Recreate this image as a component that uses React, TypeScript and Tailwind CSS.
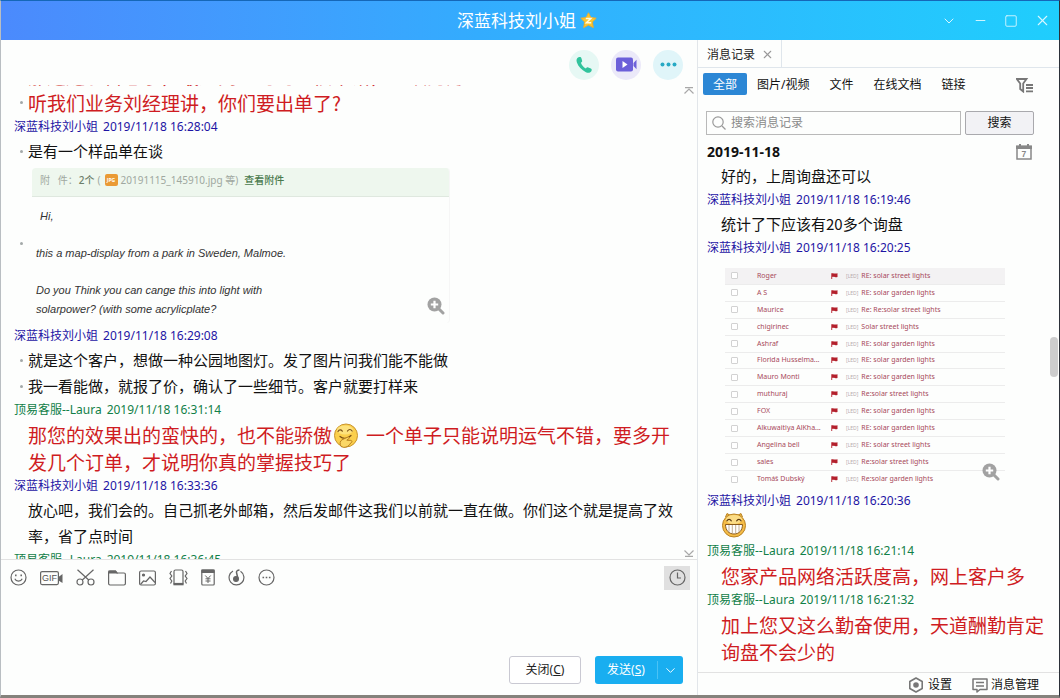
import React, { useState } from 'react';
import { ChevronDown, Minus, Square, X } from 'lucide-react';

const FONT = "font-['Noto_Sans','Noto_Sans_CJK_SC',sans-serif]";
const CJK = "font-['Noto_Sans_CJK_SC',sans-serif]";

const mails = [
  { from: 'Roger', subject: 'RE: solar street lights' },
  { from: 'A S', subject: 'RE: solar garden lights' },
  { from: 'Maurice', subject: 'Re: Re:solar street lights' },
  { from: 'chigirinec', subject: 'Solar street lights' },
  { from: 'Ashraf', subject: 'RE: solar garden lights' },
  { from: 'Florida Husselma...', subject: 'RE: solar garden lights' },
  { from: 'Mauro Monti', subject: 'Re: solar garden lights' },
  { from: 'muthuraj', subject: 'Re:solar street lights' },
  { from: 'FOX', subject: 'Re: solar garden lights' },
  { from: 'Alkuwaitiya AlKha...', subject: 'RE: solar garden lights' },
  { from: 'Angelina bell', subject: 'RE: solar street lights' },
  { from: 'sales', subject: 'Re:solar street lights' },
  { from: 'Tomáš Dubský', subject: 'Re:solar garden lights' },
];

const tabs = ['全部', '图片/视频', '文件', '在线文档', '链接'];

function Meta({ name, time, self }: { name: string; time: string; self?: boolean }) {
  return (
    <p className={`flex h-[22px] shrink-0 gap-[5px] pl-2 text-xs leading-[22px] whitespace-nowrap ${self ? 'text-[#118048]' : 'text-[#1e14a4]'}`}>
      <span>{name}</span>
      <span>{time}</span>
    </p>
  );
}

function Line({ children, dot, red }: { children: React.ReactNode; dot?: boolean; red?: boolean }) {
  return (
    <div className="flex shrink-0 pl-[14px]">
      <span className="flex h-[26px] w-2 shrink-0 items-center">
        {dot && <span className="h-[3px] w-[3px] rounded-full bg-[#a3a9a9]" />}
      </span>
      <p
        className={
          red
            ? `min-w-0 flex-1 text-[19px] leading-[27px] text-[#cf1c22] ${CJK}`
            : `min-w-0 flex-1 text-[15px] leading-[26px] text-[#111] ${CJK}`
        }
      >
        {children}
      </p>
    </div>
  );
}

function ZoomIcon() {
  return (
    <svg width="18" height="18" viewBox="0 0 18 18" fill="none">
      <path d="M11.5 11.5 16 16" stroke="#a2a2a2" strokeWidth="3" strokeLinecap="round" />
      <circle cx="7.5" cy="7.5" r="7" fill="#a2a2a2" />
      <path d="M7.5 3.8v7.4M3.8 7.5h7.4" stroke="#fff" strokeWidth="2.2" />
    </svg>
  );
}

function StarIcon() {
  return (
    <svg width="17" height="17" viewBox="0 0 17 17">
      <path
        d="M8.5.8 10.8 5.6 16.2 6.2 12.3 10 13.3 15.6 8.5 13 3.7 15.6 4.7 10 .8 6.2 6.2 5.6Z"
        fill="#fbc62e"
        stroke="#f0ae2a"
        strokeWidth="1"
        strokeLinejoin="round"
      />
      <path d="M5.8 6.6h5L6.4 10.8h4.8" fill="none" stroke="#fffbe0" strokeWidth="1.5" />
    </svg>
  );
}

function GiggleEmoji() {
  return (
    <svg className="mr-[7px] ml-px inline-block align-[-5px]" width="26" height="25" viewBox="0 0 26 25" fill="none">
      <circle cx="13" cy="12.5" r="11.5" fill="#fbcf4c" stroke="#c9952f" />
      <ellipse cx="12" cy="7" rx="8" ry="4.5" fill="#fde27d" />
      <path d="M5 8.5c1.2-2 3-2 4.3-.3M14.5 8c1.4-2 3.3-2 4.6 0" stroke="#7a4f16" strokeWidth="1.2" strokeLinecap="round" />
      <path d="M7 13.5c3 2.6 8 2.4 11-1" stroke="#7a4f16" strokeWidth="1.2" strokeLinecap="round" />
      <path d="M8 23.5c-1.5-3-1-5.5 1-6.7l6-2.8c1.5-.5 2 .9.8 1.7l-2 1.5 4 .2c1.6.3 1.6 2 0 2.4-1.5 3-4 4.6-7 4.6Z" fill="#fbd766" stroke="#b9801f" />
    </svg>
  );
}

function GrinEmoji() {
  return (
    <svg width="26" height="26" viewBox="0 0 26 26" fill="none">
      <path d="M4.5 5 6 1.5 9 3.2M21.5 5 20 1.5 17 3.2" fill="#eeb63f" stroke="#b98326" />
      <circle cx="13" cy="13.5" r="11.5" fill="#f5bc46" stroke="#b98326" />
      <ellipse cx="13" cy="7.5" rx="8" ry="4.5" fill="#fbdc86" />
      <path d="M6 8.8c1-2 3.2-2 4.2 0M15.8 8.8c1-2 3.2-2 4.2 0" stroke="#5d3a10" strokeWidth="1.3" strokeLinecap="round" />
      <path d="M4.5 12.5h17c0 6-3.5 9.5-8.5 9.5s-8.5-3.5-8.5-9.5Z" fill="#fff" stroke="#8a5a1c" />
      <path d="M8 13v6.8M11.3 13v8.5M14.7 13v8.5M18 13v6.8" stroke="#b39b78" strokeWidth=".8" />
    </svg>
  );
}

function ScrollArrow({ down }: { down?: boolean }) {
  return (
    <svg width="10" height="7" viewBox="0 0 10 7" fill="none" stroke="#a8a8a8" strokeWidth="1.2">
      {down ? <path d="M.5.5 5 5 9.5.5M1 6.4h8" /> : <path d="M1 .6h8M.5 6.5 5 2l4.5 4.5" />}
    </svg>
  );
}

const tools = [
  {
    label: '表情',
    icon: (
      <svg width="17" height="17" viewBox="0 0 17 17" fill="none" stroke="#666" strokeWidth="1.2">
        <circle cx="8.5" cy="8.5" r="7.5" />
        <path d="M4.8 9.8c1.3 3 6.1 3 7.4 0" />
        <path d="M5.8 5.5v1.8M11.2 5.5v1.8" strokeWidth="1.5" />
      </svg>
    ),
  },
  {
    label: 'GIF',
    icon: (
      <svg width="23" height="16" viewBox="0 0 23 16" fill="none">
        <rect x=".6" y="1.6" width="17.8" height="13" rx="1.5" stroke="#666" strokeWidth="1.2" />
        <path d="M18.5 7 22.5 4v9l-4-2.5Z" fill="#666" />
        <text x="2" y="11.3" fontSize="9" fontFamily="Liberation Sans" fill="#555">GIF</text>
      </svg>
    ),
  },
  {
    label: '截图',
    icon: (
      <svg width="19" height="17" viewBox="0 0 19 17" fill="none" stroke="#666" strokeWidth="1.2">
        <path d="M1.5.8 13 11.3M17.5.8 6 11.3" />
        <circle cx="4" cy="13" r="3" />
        <circle cx="15" cy="13" r="3" />
      </svg>
    ),
  },
  {
    label: '文件',
    icon: (
      <svg width="18" height="16" viewBox="0 0 18 16" fill="none" stroke="#666" strokeWidth="1.2">
        <path d="M.6 2.5C.6 1.5 1 1 2 1h5.5l1.5 2h7c1 0 1.4.5 1.4 1.4v9.2c0 .9-.4 1.4-1.4 1.4H2c-1 0-1.4-.5-1.4-1.4Z" />
        <path d="M1 1h6.5L9 3H1Z" fill="#666" />
      </svg>
    ),
  },
  {
    label: '图片',
    icon: (
      <svg width="17" height="16" viewBox="0 0 17 16" fill="none" stroke="#666" strokeWidth="1.2">
        <rect x=".6" y="1" width="15.8" height="14" rx="1.5" />
        <path d="m1.5 14.5 3-3.5 2.5.5 4-4.5 5 5.5" />
        <circle cx="4.5" cy="5" r="1" fill="#666" />
      </svg>
    ),
  },
  {
    label: '抖动',
    icon: (
      <svg width="19" height="17" viewBox="0 0 19 17" fill="none" stroke="#666" strokeWidth="1.2">
        <rect x="5" y="1" width="9" height="14.5" rx="1.5" />
        <path d="M5 14.5h9v1.2H5Z" fill="#666" />
        <path d="M2.5 2 1 4.5 2.8 7 1 9.5 2.8 12l-1.3 2.5M16.5 2 18 4.5 16.2 7 18 9.5 16.2 12l1.3 2.5" />
      </svg>
    ),
  },
  {
    label: '红包',
    icon: (
      <svg width="14" height="17" viewBox="0 0 14 17" fill="none" stroke="#666" strokeWidth="1.2">
        <rect x=".8" y="1" width="12.4" height="15" rx="1" />
        <path d="M1 1h12v2.5H1Z" fill="#666" />
        <path d="m4.3 6.5 2.7 3 2.7-3M7 9.5V14M4.5 9.8h5M4.5 12h5" strokeWidth="1" />
      </svg>
    ),
  },
  {
    label: '音乐',
    icon: (
      <svg width="17" height="17" viewBox="0 0 17 17" fill="none" stroke="#666" strokeWidth="1.2">
        <path d="M5 2a7.4 7.4 0 1 0 7.5.3" />
        <circle cx="8" cy="10" r="2.4" fill="#666" />
        <path d="M10 10 8.5 3.5C8.3 2 9.5 1.2 11.5 1" strokeWidth="1.5" />
      </svg>
    ),
  },
  {
    label: '更多',
    icon: (
      <svg width="17" height="17" viewBox="0 0 17 17" fill="none" stroke="#666" strokeWidth="1.2">
        <circle cx="8.5" cy="8.5" r="7.5" />
        <path d="M4.5 8.5h1.6M7.7 8.5h1.6M10.9 8.5h1.6" strokeWidth="1.5" />
      </svg>
    ),
  },
];

function TitleBar() {
  return (
    <header className="flex h-[39px] shrink-0 items-center bg-linear-to-r from-[#4b8afd] via-[#33acfe] via-45% to-[#1fcefd] text-white">
      <div className="flex-1" />
      <h1 className="flex items-center gap-1 pl-[2px] text-[17px] leading-6">
        深蓝科技刘小姐
        <StarIcon />
      </h1>
      <div className="flex flex-1 justify-end gap-4 pr-2 text-[#d9f7ff]">
        <button aria-label="展开"><ChevronDown size={16} strokeWidth={1.5} /></button>
        <button aria-label="最小化"><Minus size={15} strokeWidth={1.5} /></button>
        <button aria-label="最大化"><Square size={14} strokeWidth={1.5} /></button>
        <button aria-label="关闭窗口"><X size={17} strokeWidth={1.5} /></button>
      </div>
    </header>
  );
}

function MailPreview() {
  return (
    <div className="flex h-[161px] shrink-0 pt-1 pl-[14px]">
      <span className="mt-[74px] h-[3px] w-[3px] shrink-0 rounded-full bg-[#a3a9a9]" />
      <div className="relative ml-[9px] h-[155px] w-[418px] overflow-hidden rounded-t-sm rounded-b-sm border-r border-[#f6f6f6]">
        <div className="flex h-[29px] items-center border-b border-[#dfe8df] bg-[#eef7ee] pb-1 pl-2 text-[10px] leading-4 whitespace-pre text-[#a0a8a0]">
          <span>附   件：</span>
          <b className="pl-px font-medium text-[#6c7f6c]">2个</b>
          <span className="pr-1 pl-[3px]">(</span>
          <span className="flex h-3 w-[13px] items-center justify-center rounded-[2px] bg-[#ea9a35] text-[5px] font-bold text-white">JPG</span>
          <span className="pl-[3px]">20191115_145910.jpg 等)</span>
          <a href="#" className="pl-[6px] font-medium text-[#4a7a4d]">查看附件</a>
        </div>
        <div className="pt-[10px] pl-1 font-['Liberation_Sans',sans-serif] text-[11px] leading-[19px] text-[#333] italic">
          <p className="pl-1">Hi,</p>
          <p className="pt-[18px]">this a map-display from a park in Sweden, Malmoe.</p>
          <p className="pt-[18px]">
            Do you Think you can cange this into light with
            <br />
            solarpower? (with some acrylicplate?
          </p>
        </div>
        <button aria-label="放大邮件" className="absolute right-1 bottom-2"><ZoomIcon /></button>
      </div>
    </div>
  );
}

function Chat() {
  return (
    <main className="flex min-w-0 flex-1 flex-col">
      <div className="flex h-[45px] shrink-0 items-center justify-end gap-3 pt-1 pr-[14px]">
        <button aria-label="语音通话" className="flex h-[30px] w-[30px] items-center justify-center rounded-full bg-[#e6f8f4]">
          <svg width="18" height="18" viewBox="0 0 18 18">
            <path
              d="M3.5 1.3C5 .6 6 1 6.5 2.4l.6 2c.3 1-.2 1.7-1.2 2.3.8 2.3 2.6 4.5 5 5.7.7-1 1.5-1.3 2.4-.9l2.5 1.1c1.2.6 1.2 1.7.4 2.8-1.2 1.6-3.3 1.8-5.3.8C6.7 14 3.3 10.5 1.9 6.5 1 4 1.7 2.2 3.5 1.3Z"
              fill="#31c39c"
            />
          </svg>
        </button>
        <button aria-label="视频通话" className="flex h-[30px] w-[30px] items-center justify-center rounded-full bg-[#ebe9f9]">
          <svg width="21" height="15" viewBox="0 0 21 15">
            <rect x="0" y=".5" width="17" height="14" rx="2" fill="#6c5fd9" />
            <path d="m17.5 6 3-3.2v9.4l-3-3.2Z" fill="#6c5fd9" />
            <path d="m6.5 4 5 3.5-5 3.5Z" fill="#fff" />
          </svg>
        </button>
        <button aria-label="更多操作" className="flex h-[30px] w-[30px] items-center justify-center rounded-full bg-[#e0f5f9]">
          <svg width="17" height="5" viewBox="0 0 17 5" fill="#27a9c4">
            <circle cx="2.5" cy="2.5" r="2" />
            <circle cx="8.5" cy="2.5" r="2" />
            <circle cx="14.5" cy="2.5" r="2" />
          </svg>
        </button>
      </div>

      <div className="flex min-h-0 flex-1">
        <section className="flex min-w-0 flex-1 flex-col overflow-hidden pl-[5px]">
          {/* tail of the message scrolled out of view */}
          <div className="flex h-1 shrink-0 items-end overflow-hidden">
            <Line red>那这边恭喜您了，最近网上的询盘很不错，继续努力</Line>
          </div>
          <Line red dot>听我们业务刘经理讲，你们要出单了?</Line>
          <Meta name="深蓝科技刘小姐" time="2019/11/18 16:28:04" />
          <Line dot>是有一个样品单在谈</Line>
          <MailPreview />
          <Meta name="深蓝科技刘小姐" time="2019/11/18 16:29:08" />
          <Line dot>就是这个客户，想做一种公园地图灯。发了图片问我们能不能做</Line>
          <Line dot>我一看能做，就报了价，确认了一些细节。客户就要打样来</Line>
          <Meta self name="顶易客服--Laura" time="2019/11/18 16:31:14" />
          <Line red>
            那您的效果出的蛮快的，也不能骄傲
            <GiggleEmoji />
            一个单子只能说明运气不错，要多开发几个订单，才说明你真的掌握技巧了
          </Line>
          <Meta name="深蓝科技刘小姐" time="2019/11/18 16:33:36" />
          <Line>放心吧，我们会的。自己抓老外邮箱，然后发邮件这我们以前就一直在做。你们这个就是提高了效率，省了点时间</Line>
          <Meta self name="顶易客服--Laura" time="2019/11/18 16:36:45" />
        </section>
        <div className="flex w-4 shrink-0 flex-col items-center justify-between py-[2px]">
          <ScrollArrow />
          <ScrollArrow down />
        </div>
      </div>

      <form className="flex h-[136px] shrink-0 flex-col border-t border-[#e2e2e2]" onSubmit={(e) => e.preventDefault()}>
        <div className="flex h-[35px] shrink-0 items-center gap-[13px] pr-[7px] pl-[9px]">
          {tools.map((tool) => (
            <button key={tool.label} type="button" aria-label={tool.label}>{tool.icon}</button>
          ))}
          <button type="button" aria-label="消息记录" className="ml-auto flex h-6 w-[26px] items-center justify-center bg-[#e0e0e0]">
            <svg width="17" height="17" viewBox="0 0 17 17" fill="none" stroke="#666" strokeWidth="1.2">
              <circle cx="8.5" cy="8.5" r="7.5" />
              <path d="M8.5 3.5V9H12" />
            </svg>
          </button>
        </div>
        <textarea aria-label="输入消息" className="min-h-0 flex-1 resize-none bg-transparent px-3 text-[15px] outline-none" />
        <div className="flex shrink-0 justify-end gap-[14px] pr-[14px] pb-[11px] text-xs">
          <button type="button" className="h-7 w-[72px] rounded-[3px] border border-[#c9c9d2] bg-white text-[#222]">
            关闭(<u>C</u>)
          </button>
          <div className="flex h-7 w-[88px] items-center rounded-[3px] bg-[#19aef0] text-white">
            <button type="submit" className="h-7 flex-1">
              发送(<u>S</u>)
            </button>
            <button type="button" aria-label="发送选项" className="flex h-[18px] w-[26px] items-center justify-center border-l border-[#4bc2f5]">
              <ChevronDown size={15} strokeWidth={1.5} />
            </button>
          </div>
        </div>
      </form>
    </main>
  );
}

function MailTable() {
  return (
    <div className="relative h-[231px] shrink-0 pt-[9px] pl-[26px]">
      <table className="h-[219px] w-[280px] table-fixed border-collapse text-[7px] leading-[10px] text-[#a84a5c]">
        <tbody>
          {mails.map((mail, i) => (
            <tr key={i} className="border-b border-[#ececec] first:bg-[#f3f2f3] last:border-b-0">
              <td className="w-8 pl-[6px]">
                <input
                  type="checkbox"
                  aria-label={mail.from}
                  className="block h-[7px] w-[7px] appearance-none rounded-[1px] border border-[#d2d2d2] bg-white"
                />
              </td>
              <td className="w-[74px] whitespace-nowrap">{mail.from}</td>
              <td className="w-[15px]">
                <svg width="7" height="6" viewBox="0 0 7 6" fill="#b3202c">
                  <path d="M.3.3c2-.6 3 .8 6.2 0v3.6c-3 .8-4-.5-5.3 0V6H.3Z" />
                </svg>
              </td>
              <td className="whitespace-nowrap">
                <span className="mr-[3px] text-[5px] text-[#b5a9ad]">[LED]</span>
                {mail.subject}
              </td>
            </tr>
          ))}
        </tbody>
      </table>
      <button aria-label="放大图片" className="absolute bottom-[9px] left-[283px]"><ZoomIcon /></button>
    </div>
  );
}

function History() {
  const [active, setActive] = useState('全部');

  return (
    <aside className="flex w-[362px] shrink-0 flex-col border-l border-[#e2e6ea]">
      <div className="flex h-7 shrink-0 border-b border-[#dfe6ec]">
        <div className="flex w-[84px] items-center gap-[6px] border-r border-[#dfe6ec] pt-[2px] pl-[9px] text-xs text-[#222]">
          消息记录
          <button aria-label="关闭消息记录" className="text-[#999]"><X size={13} strokeWidth={2} /></button>
        </div>
      </div>

      <nav className="flex shrink-0 items-center py-[5px] pl-[5px] text-xs text-[#111]">
        {tabs.map((tab) => (
          <button
            key={tab}
            onClick={() => setActive(tab)}
            className={`h-[22px] rounded-[2px] px-[10px] pt-[2px] ${active === tab ? 'bg-[#2c87d5] text-white' : ''}`}
          >
            {tab}
          </button>
        ))}
        <button aria-label="筛选" className="mr-[26px] ml-auto pt-[2px]">
          <svg width="17" height="15" viewBox="0 0 17 15" fill="none" stroke="#777" strokeWidth="1.8">
            <path d="M.8 1h9.7L7.2 5.5v8L4.2 11V5.5Z" />
            <path d="M10 7h7M10 10h7M10 13.3h7" />
          </svg>
        </button>
      </nav>

      <form className="flex shrink-0 gap-1 pt-[11px] pr-[25px] pl-2 text-xs" onSubmit={(e) => e.preventDefault()}>
        <label className="flex h-6 min-w-0 flex-1 items-center gap-[5px] border border-[#b9b9b9] pl-[5px]">
          <svg width="14" height="14" viewBox="0 0 14 14" fill="none" stroke="#999" strokeWidth="1.2">
            <circle cx="6" cy="6" r="5.2" />
            <path d="m10 10 3.5 3.5" />
          </svg>
          <input aria-label="搜索消息记录" placeholder="搜索消息记录" className="min-w-0 flex-1 outline-none placeholder:text-[#8a8a8a]" />
        </label>
        <button className="h-6 w-[69px] rounded-[2px] border border-[#a9a9ad] bg-[#f2f2f5] text-[#111]">搜索</button>
      </form>

      <div className="mt-[6px] flex h-[22px] shrink-0 items-center justify-between pr-[27px] pl-[9px]">
        <h2 className="text-sm font-bold text-[#111]">2019-11-18</h2>
        <button aria-label="选择日期">
          <svg width="16" height="16" viewBox="0 0 16 16" fill="none">
            <path d="M1 2.5h14V15H1Z" stroke="#888" strokeWidth="1.5" />
            <path d="M0 1.5h16V5H0ZM3 0h2v2H3ZM11 0h2v2h-2Z" fill="#888" />
            <text x="5.5" y="13" fontSize="8.5" fontFamily="Liberation Sans" fontWeight="bold" fill="#888">7</text>
          </svg>
        </button>
      </div>

      <div className="flex min-h-0 flex-1">
        <section className="flex min-w-0 flex-1 flex-col overflow-hidden pl-px">
          <Line>好的，上周询盘还可以</Line>
          <Meta name="深蓝科技刘小姐" time="2019/11/18 16:19:46" />
          <Line>统计了下应该有20多个询盘</Line>
          <Meta name="深蓝科技刘小姐" time="2019/11/18 16:20:25" />
          <MailTable />
          <Meta name="深蓝科技刘小姐" time="2019/11/18 16:20:36" />
          <div className="h-7 shrink-0 pl-[22px]"><GrinEmoji /></div>
          <Meta self name="顶易客服--Laura" time="2019/11/18 16:21:14" />
          <Line red>您家产品网络活跃度高，网上客户多</Line>
          <Meta self name="顶易客服--Laura" time="2019/11/18 16:21:32" />
          <Line red>加上您又这么勤奋使用，天道酬勤肯定询盘不会少的</Line>
        </section>
        <div className="w-[9px] shrink-0 pt-[174px]">
          <div className="h-10 w-2 rounded-full bg-[#cdcdcd]" />
        </div>
      </div>

      <footer className="flex h-[23px] shrink-0 items-center justify-end gap-5 border-t border-[#e2e2e2] pt-[2px] pr-5 text-xs text-[#111]">
        <button className="flex items-center gap-1">
          <svg width="16" height="16" viewBox="0 0 16 16" fill="none" stroke="#777" strokeWidth="1.6">
            <path d="M8 1 14.2 4.5v7L8 15l-6.2-3.5v-7Z" strokeLinejoin="round" />
            <circle cx="8" cy="8" r="2" fill="#777" />
          </svg>
          设置
        </button>
        <button className="flex items-center gap-[3px]">
          <svg width="16" height="15" viewBox="0 0 16 15" fill="none" stroke="#777" strokeWidth="1.5">
            <path d="M1 1h14v10.5H8L5 14v-2.5H1Z" strokeLinejoin="round" />
            <path d="M4 4.5h8M4 8h8" />
          </svg>
          消息管理
        </button>
      </footer>
    </aside>
  );
}

export default function App() {
  return (
    <div lang="zh-CN" className={`flex h-screen flex-col border-t border-r border-b-[3px] border-l border-t-[#1567b8] border-r-[#2b3038] border-b-[#85827c] border-l-[#b9bec2] bg-[#fdfefd] ${FONT}`}>
      <TitleBar />
      <div className="flex min-h-0 flex-1">
        <Chat />
        <History />
      </div>
    </div>
  );
}
